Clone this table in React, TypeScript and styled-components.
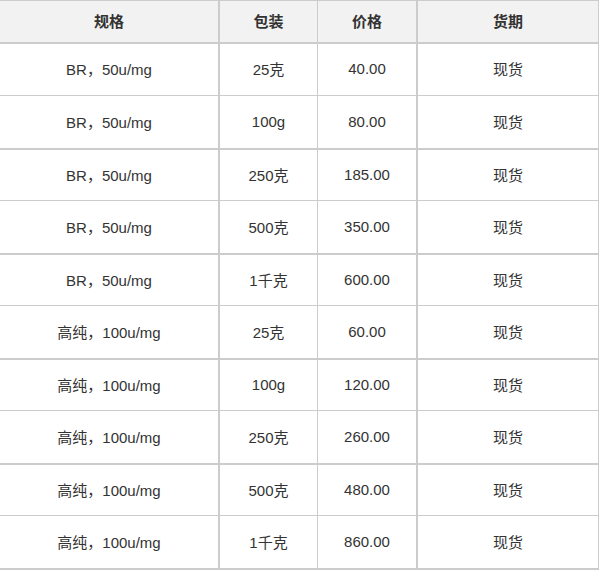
import React from "react";
import styled, { createGlobalStyle } from "styled-components";

const GlobalStyle = createGlobalStyle`
  html, body {
    margin: 0;
    padding: 0;
    background: #ffffff;
  }
  body {
    font-family: "Liberation Sans", Arial, "Noto Sans CJK SC", sans-serif;
    color: #333333;
  }
`;

const Table = styled.div`
  width: 599px;
  border-top: 1px solid #cccccc;
  box-sizing: border-box;
`;

const Row = styled.div<{ $height: number; $thick: boolean; $head?: boolean }>`
  display: grid;
  grid-template-columns: 220px 98px 100px 181px;
  height: ${(p) => p.$height}px;
  box-sizing: border-box;
  border-bottom: ${(p) => (p.$thick ? 2 : 1)}px solid #cccccc;
  background: ${(p) => (p.$head ? "#f2f2f2" : "#ffffff")};
`;

const Cell = styled.div<{ $head?: boolean }>`
  display: flex;
  align-items: center;
  justify-content: center;
  box-sizing: border-box;
  padding-bottom: 2px;
  font-size: 15px;
  font-weight: ${(p) => (p.$head ? 700 : 400)};
  color: #333333;
  white-space: nowrap;

  &:nth-child(1) { border-right: 2px solid #cccccc; }
  &:nth-child(2) { border-right: 1px solid #cccccc; }
  &:nth-child(3) { border-right: 2px solid #cccccc; }
  &:nth-child(4) { border-right: 1px solid #cccccc; }
`;

const rows = [
  ["BR，50u/mg", "25克", "40.00", "现货"],
  ["BR，50u/mg", "100g", "80.00", "现货"],
  ["BR，50u/mg", "250克", "185.00", "现货"],
  ["BR，50u/mg", "500克", "350.00", "现货"],
  ["BR，50u/mg", "1千克", "600.00", "现货"],
  ["高纯，100u/mg", "25克", "60.00", "现货"],
  ["高纯，100u/mg", "100g", "120.00", "现货"],
  ["高纯，100u/mg", "250克", "260.00", "现货"],
  ["高纯，100u/mg", "500克", "480.00", "现货"],
  ["高纯，100u/mg", "1千克", "860.00", "现货"],
];

export default function App() {
  return (
    <>
      <GlobalStyle />
      <Table>
        <Row $height={43} $thick $head>
          <Cell $head>规格</Cell>
          <Cell $head>包装</Cell>
          <Cell $head>价格</Cell>
          <Cell $head>货期</Cell>
        </Row>
        {rows.map((r, i) => {
          const thick = i % 2 === 1;
          const height = i === 0 ? 52 : thick ? 54 : 51;
          return (
            <Row key={i} $height={height} $thick={thick}>
              {r.map((c, j) => (
                <Cell key={j}>{c}</Cell>
              ))}
            </Row>
          );
        })}
      </Table>
    </>
  );
}
